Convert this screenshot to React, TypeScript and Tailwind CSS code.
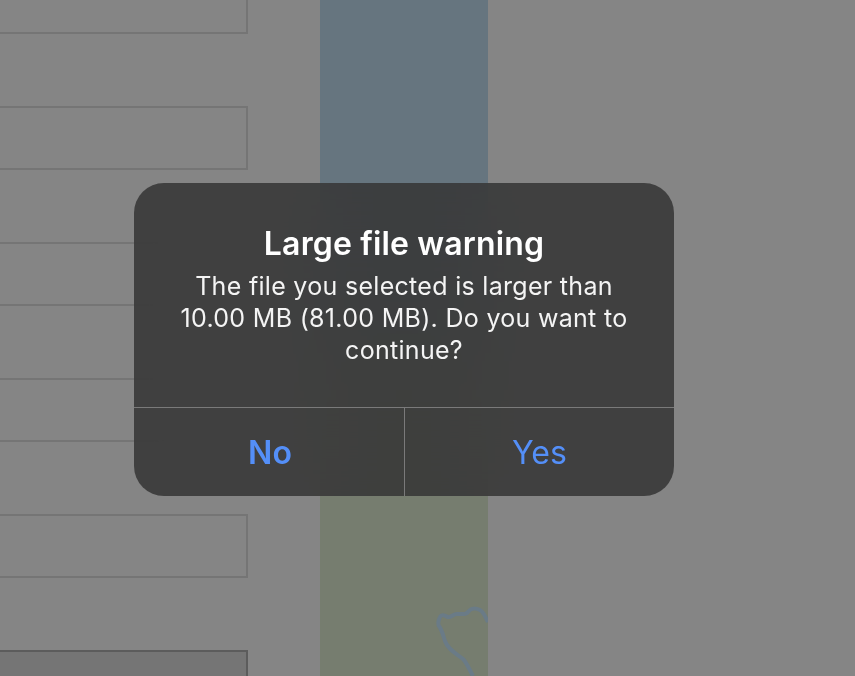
import React from 'react';

const fieldTops = [0, 1, 2, 3, 4];

const App = () => {
  return (
    <div className="relative w-[855px] h-[676px] overflow-hidden bg-[#858585] font-['Inter',sans-serif]">
      <div className="flex h-full">
        {/* Form fields, cut off on the left */}
        <div className="w-[248px] -mt-[30px] flex flex-col gap-[72px] shrink-0">
          {fieldTops.map((i) => (
            <div key={i} className="h-[64px] shrink-0 border-2 border-l-0 border-[#757575]" />
          ))}
          <div className="h-[64px] shrink-0 border-2 border-l-0 border-[#5c5c5c] bg-[#757575]" />
        </div>

        {/* Map strip */}
        <div className="relative ml-[72px] w-[168px] h-full flex flex-col shrink-0">
          <div className="h-[340px] bg-[#66757f]" />
          <div className="flex-1 bg-[#767d6f]" />
          <svg className="absolute inset-0" width="168" height="676" viewBox="0 0 168 676" fill="none">
            <path
              d="M168 622 C165 617 164 612 160 610 C156 608 151 608 149 611 C146 615 143 614 137 614 C133 614 131 618 128 617 C125 616 122 613 120 617 C118 620 118 625 119 626 C122 630 123 635 125 641 C128 650 137 654 143 659 C147 663 150 671 153 676"
              stroke="#6a7b87"
              strokeWidth="4"
              strokeLinejoin="round"
            />
          </svg>
        </div>
      </div>

      {/* Alert dialog */}
      <div className="absolute left-[134px] top-[183px] w-[540px] h-[313px] flex flex-col rounded-[30px] overflow-hidden bg-[#363636]/[0.87] backdrop-blur-2xl text-white">
        <div className="h-[224px] px-[40px] pt-[41px] text-center">
          <h1 className="text-[32px] leading-[40px] font-semibold tracking-[0.15px]">Large file warning</h1>
          <p className="mt-[6px] text-[25px] leading-[32px] tracking-[0.3px] text-[#f4f4f4]">
            The file you selected is larger than 10.00 MB (81.00 MB). Do you want to continue?
          </p>
        </div>
        <div className="flex flex-1 border-t border-[#7a7a7a]">
          <div className="w-[271px] pt-[2px] pl-[2px] flex items-center justify-center border-r border-[#7a7a7a] text-[32px] font-semibold text-[#548ff8]">
            No
          </div>
          <div className="flex-1 pt-[2px] flex items-center justify-center text-[32px] text-[#548ff8]">Yes</div>
        </div>
      </div>
    </div>
  );
};

export default App;
